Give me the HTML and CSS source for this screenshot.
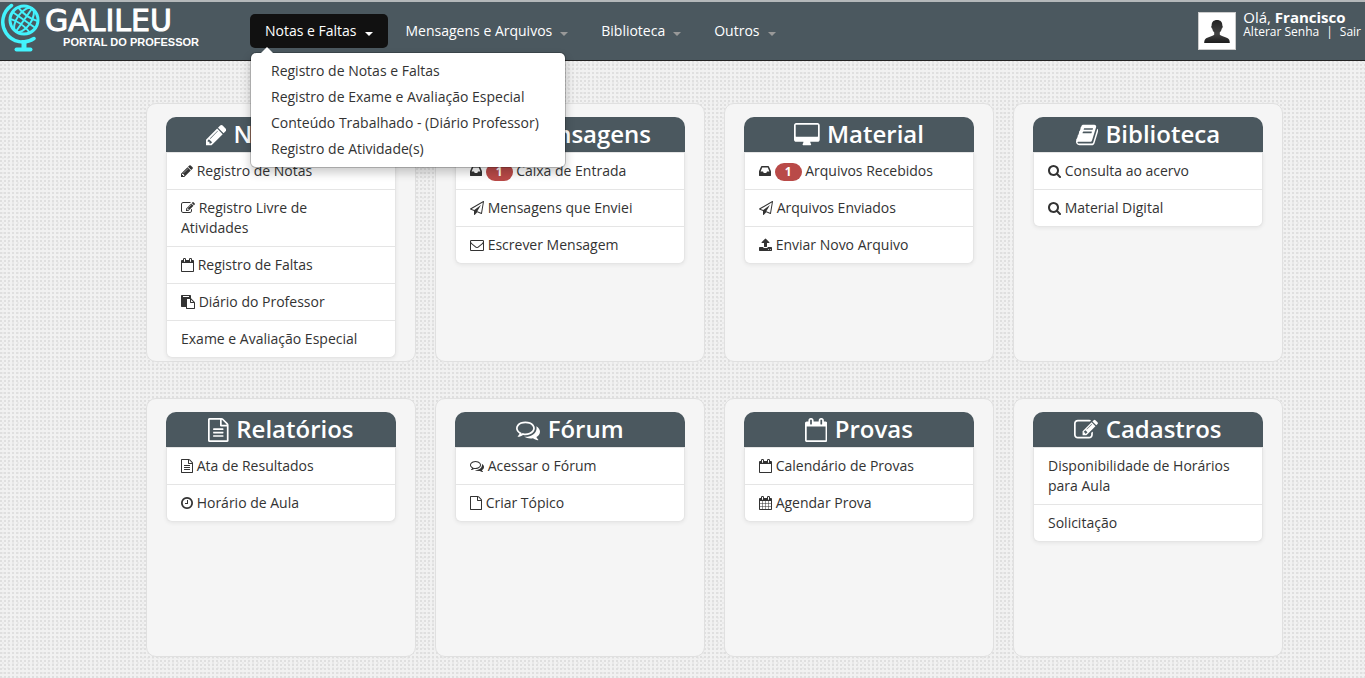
FILE: index.html
```html
<!DOCTYPE html>
<html lang="pt-BR">
<head>
<meta charset="utf-8">
<meta name="viewport" content="width=device-width, initial-scale=1">
<title>Galileu - Portal do Professor</title>
<link rel="stylesheet" href="styles.css">
</head>
<body>
<svg class="sprite" aria-hidden="true">
  <defs>
    <path id="pencil" d="M491 1536l91-91-235-235-91 91v107h128v128h107zm523-928q0-22-22-22-10 0-17 7l-542 542q-7 7-7 17 0 22 22 22 10 0 17-7l542-542q7-7 7-17zm-54-192l416 416-832 832h-416v-416zm683 96q0 53-37 90l-166 166-416-416 166-165q36-38 90-38 53 0 91 38l235 234q37 39 37 91z"/>
    <path id="edit" d="M888 1184l116-116-152-152-116 116v56h96v96h56zm440-720q-16-16-33 1l-350 350q-17 17-1 33t33-1l350-350q17-17 1-33zm80 594v190q0 119-84.5 203.5t-203.5 84.5h-832q-119 0-203.5-84.5t-84.5-203.5v-832q0-119 84.5-203.5t203.5-84.5h832q63 0 117 25 15 7 18 23 3 17-9 29l-49 49q-14 14-32 8-23-6-45-6h-832q-66 0-113 47t-47 113v832q0 66 47 113t113 47h832q66 0 113-47t47-113v-126q0-13 9-22l64-64q15-15 35-7t20 29zm-96-738l288 288-672 672h-288v-288zm444 132l-92 92-288-288 92-92q28-28 68-28t68 28l152 152q28 28 28 68t-28 68z"/>
    <path id="calendar-o" d="M192 1664h1408v-1024h-1408v1024zm384-1216v-288q0-14-9-23t-23-9h-64q-14 0-23 9t-9 23v288q0 14 9 23t23 9h64q14 0 23-9t9-23zm768 0v-288q0-14-9-23t-23-9h-64q-14 0-23 9t-9 23v288q0 14 9 23t23 9h64q14 0 23-9t9-23zm384-64v1280q0 52-38 90t-90 38h-1408q-52 0-90-38t-38-90v-1280q0-52 38-90t90-38h128v-96q0-66 47-113t113-47h64q66 0 113 47t47 113v96h384v-96q0-66 47-113t113-47h64q66 0 113 47t47 113v96h128q52 0 90 38t38 90z"/>
    <path id="calendar" d="M192 1664h288v-288h-288v288zm352 0h320v-288h-320v288zm-352-352h288v-320h-288v320zm352 0h320v-320h-320v320zm-352-384h288v-288h-288v288zm736 736h320v-288h-320v288zm-384-736h320v-288h-320v288zm768 736h288v-288h-288v288zm-384-352h320v-320h-320v320zm-352-864v-288q0-13-9.5-22.5t-22.5-9.5h-64q-13 0-22.5 9.5t-9.5 22.5v288q0 13 9.5 22.5t22.5 9.5h64q13 0 22.5-9.5t9.5-22.5zm736 864h288v-320h-288v320zm-384-384h320v-288h-320v288zm384 0h288v-288h-288v288zm32-480v-288q0-13-9.5-22.5t-22.5-9.5h-64q-13 0-22.5 9.5t-9.5 22.5v288q0 13 9.5 22.5t22.5 9.5h64q13 0 22.5-9.5t9.5-22.5zm384-64v1280q0 52-38 90t-90 38h-1408q-52 0-90-38t-38-90v-1280q0-52 38-90t90-38h128v-96q0-66 47-113t113-47h64q66 0 113 47t47 113v96h384v-96q0-66 47-113t113-47h64q66 0 113 47t47 113v96h128q52 0 90 38t38 90z"/>
    <path id="paste" d="M768 1664h896v-640h-416q-40 0-68-28t-28-68v-416h-384v1152zm256-1440v-64q0-13-9.500-22.500t-22.500-9.500h-704q-13 0-22.500 9.500t-9.500 22.500v64q0 13 9.500 22.500t22.500 9.500h704q13 0 22.500-9.500t9.500-22.500zm256 672h299l-299-299v299zm512 128v672q0 40-28 68t-68 28h-960q-40 0-68-28t-28-68v-160h-544q-40 0-68-28t-28-68v-1344q0-40 28-68t68-28h1088q40 0 68 28t28 68v328q21 13 36 28l408 408q28 28 48 76t20 88z"/>
    <path id="inbox" d="M1151 960h316q-1-3-2.500-8t-2.500-8l-212-496h-708l-212 496q-1 2-2.500 8t-2.500 8h316l95 192h320zm513 30v482q0 26-19 45t-45 19h-1408q-26 0-45-19t-19-45v-482q0-62 25-123l238-552q10-25 36.500-42t52.500-17h832q26 0 52.500 17t36.500 42l238 552q25 61 25 123z"/>
    <path id="plane" d="M1764 11q33 24 27 64l-256 1536q-5 29-32 45-14 8-31 8-11 0-24-5l-527-215-298 327q-18 21-47 21-14 0-23-4-19-7-30-23.500t-11-36.500v-452l-472-193q-37-14-40-55-3-39 32-59l1664-960q35-21 68 2zm-342 1499l221-1323-1434 827 336 137 863-639-478 797z"/>
    <path id="envelope" d="M1664 1504v-768q-32 36-69 66-268 206-426 338-51 43-83 67t-86.500 48.500-102.500 24.500h-2q-48 0-102.500-24.500t-86.500-48.500-83-67q-158-132-426-338-37-30-69-66v768q0 13 9.500 22.500t22.500 9.500h1472q13 0 22.500-9.500t9.500-22.500zm0-1051v-24.500l-.5-13-3-12.500-5.500-9-9-7.500-14-2.500h-1472q-13 0-22.500 9.500t-9.500 22.500q0 168 147 284 193 152 401 317 6 5 35 29.500t46 37.500 44.500 31.500 50.500 27.500 43 9h2q20 0 43-9t50.500-27.500 44.500-31.500 46-37.500 35-29.500q208-165 401-317 54-43 100.500-115.500t46.500-131.500zm128-37v1088q0 66-47 113t-113 47h-1472q-66 0-113-47t-47-113v-1088q0-66 47-113t113-47h1472q66 0 113 47t47 113z"/>
    <path id="upload" d="M1344 1472q0-26-19-45t-45-19-45 19-19 45 19 45 45 19 45-19 19-45zm256 0q0-26-19-45t-45-19-45 19-19 45 19 45 45 19 45-19 19-45zm128-224v320q0 40-28 68t-68 28h-1472q-40 0-68-28t-28-68v-320q0-40 28-68t68-28h427q21 56 70.500 92t110.500 36h256q61 0 110.500-36t70.500-92h427q40 0 68 28t28 68zm-325-648q-17 40-59 40h-256v448q0 26-19 45t-45 19h-256q-26 0-45-19t-19-45v-448h-256q-42 0-59-40-17-39 14-69l448-448q18-19 45-19t45 19l448 448q31 30 14 69z"/>
    <path id="desktop" d="M1728 992v-832q0-13-9.500-22.500t-22.500-9.500h-1600q-13 0-22.500 9.500t-9.500 22.500v832q0 13 9.500 22.500t22.500 9.500h1600q13 0 22.500-9.500t9.500-22.500zm128-832v1088q0 66-47 113t-113 47h-544q0 37 16 77.500t32 71 16 43.500q0 26-19 45t-45 19h-512q-26 0-45-19t-19-45q0-14 16-44t32-70 16-78h-544q-66 0-113-47t-47-113v-1088q0-66 47-113t113-47h1600q66 0 113 47t47 113z"/>
    <path id="book" d="M1703 478q40 57 18 129l-275 906q-19 64-76.500 107.500t-122.500 43.500h-923q-77 0-148.500-53.500t-99.500-131.500q-24-67-2-127 0-4 3-27t4-37q1-8-3-21.500t-3-19.500q2-11 8-21t16.500-23.500 16.500-23.500q23-38 45-91.500t30-91.500q3-10 .5-30t-.5-28q3-11 17-28t17-23q21-36 42-92t25-90q1-9-2.500-32t.5-28q4-13 22-30.500t22-22.500q19-26 42.500-84.500t27.500-96.500q1-8-3-25.500t-2-26.500q2-8 9-18t18-23 17-21q8-12 16.500-30.500t15-35 16-36 19.500-32 26.500-23.500 36-11.500 47.500 5.500l-1 3q38-9 51-9h761q74 0 114 56t18 130l-274 906q-36 119-71.500 153.500t-128.500 34.500h-869q-27 0-38 15-11 16-1 43 24 70 144 70h923q29 0 56-15.500t35-41.500l300-987q7-22 5-57 38 15 59 43zm-1064 2q-4 13 2 22.500t20 9.500h608q13 0 25.500-9.500t16.500-22.500l21-64q4-13-2-22.500t-20-9.500h-608q-13 0-25.500 9.500t-16.500 22.500zm-83 256q-4 13 2 22.500t20 9.500h608q13 0 25.500-9.500t16.500-22.500l21-64q4-13-2-22.500t-20-9.500h-608q-13 0-25.500 9.500t-16.500 22.500z"/>
    <path id="search" d="M1216 832q0-185-131.500-316.500t-316.500-131.500-316.500 131.500-131.500 316.500 131.500 316.500 316.500 131.500 316.500-131.500 131.500-316.500zm512 832q0 52-38 90t-90 38q-54 0-90-38l-343-342q-179 124-399 124-143 0-273.500-55.500t-225-150-150-225-55.500-273.500 55.500-273.500 150-225 225-150 273.500-55.500 273.500 55.500 225 150 150 225 55.500 273.500q0 220-124 399l343 343q37 37 37 90z"/>
    <path id="file-o" d="M1596 380q28 28 48 76t20 88v1152q0 40-28 68t-68 28h-1344q-40 0-68-28t-28-68v-1600q0-40 28-68t68-28h896q40 0 88 20t76 48zm-444-244v376h376q-10-29-22-41l-313-313q-12-12-41-22zm384 1528v-1024h-416q-40 0-68-28t-28-68v-416h-768v1536h1280z"/>
    <g id="file-text">
      <use href="#file-o"/>
      <path d="M512 800q0-14 9-23t23-9h704q14 0 23 9t9 23v64q0 14-9 23t-23 9h-704q-14 0-23-9t-9-23v-64zm736 224q14 0 23 9t9 23v64q0 14-9 23t-23 9h-704q-14 0-23-9t-9-23v-64q0-14 9-23t23-9h704zm0 256q14 0 23 9t9 23v64q0 14-9 23t-23 9h-704q-14 0-23-9t-9-23v-64q0-14 9-23t23-9h704z"/>
    </g>
    <path id="clock" d="M1024 544v448q0 14-9 23t-23 9h-320q-14 0-23-9t-9-23v-64q0-14 9-23t23-9h224v-352q0-14 9-23t23-9h64q14 0 23 9t9 23zm416 352q0-148-73-273t-198-198-273-73-273 73-198 198-73 273 73 273 198 198 273 73 273-73 198-198 73-273zm224 0q0 209-103 385.500t-279.500 279.500-385.500 103-385.500-103-279.500-279.500-103-385.500 103-385.500 279.500-279.500 385.500-103 385.500 103 279.500 279.500 103 385.500z"/>
    <path id="comments" d="M704 384q-153 0-286 52t-211.500 141-78.500 191q0 82 53 158t149 132l97 56-35 84q34-20 62-39l44-31 53 10q78 14 153 14 153 0 286-52t211.500-141 78.500-191-78.500-191-211.500-141-286-52zm0-128q191 0 353.500 68.500t256.500 186.500 94 257-94 257-256.500 186.500-353.500 68.500q-86 0-176-16-124 88-278 128-36 9-86 16h-3q-11 0-20.500-8t-11.500-21q-1-3-1-6.500t.5-6.500 2-6l2.500-5 3.500-5.500 4-5 4.500-5 4-4.500q5-6 23-25t26-29.500 22.500-29 25-38.500 20.500-44q-124-72-195-177t-71-224q0-139 94-257t256.500-186.500 353.500-68.500zm822 1169q10 24 20.500 44t25 38.500 22.500 29 26 29.500 23 25q1 1 4 4.500t4.500 5 4 5 3.500 5.500l2.500 5 2 6 .5 6.500-1 6.500q-3 14-13 22t-22 7q-50-7-86-16-154-40-278-128-90 16-176 16-271 0-472-132 58 4 88 4 161 0 309-45t264-129q125-92 192-212t67-254q0-77-23-152 129 71 204 178t75 230q0 120-71 224.500t-195 176.500z"/>
  </defs>
</svg>

<header class="navbar">
  <a class="brand" href="#" aria-label="Galileu - Portal do Professor">
    <svg class="globe" viewBox="0 0 42 50" aria-hidden="true">
      <g fill="none" stroke="#43f3fd">
        <circle cx="24" cy="18" r="14" stroke-width="3"/>
        <g stroke-width="2" transform="rotate(35 24 18)">
          <path d="M24 4v28M10 18h28M12 11q12 4 24 0M12 25q12-4 24 0"/>
          <ellipse cx="24" cy="18" rx="7" ry="14"/>
        </g>
        <path d="M11.500 3.500A18.500 18.500 0 0 0 34 36.500" stroke-width="3.500" stroke-linecap="round"/>
        <path d="M24 38v9" stroke-width="5"/>
        <path d="M16.500 47.500h14" stroke-width="4" stroke-linecap="round"/>
      </g>
    </svg>
    <span class="brand-text">
      <span class="brand-name">GALILEU</span>
      <span class="brand-sub">PORTAL DO PROFESSOR</span>
    </span>
  </a>

  <nav class="menu" aria-label="Principal">
    <div class="menu-item">
      <button class="menu-button active" type="button" aria-expanded="true">Notas e Faltas <span class="caret"></span></button>
      <ul class="dropdown">
        <li><a href="#">Registro de Notas e Faltas</a></li>
        <li><a href="#">Registro de Exame e Avaliação Especial</a></li>
        <li><a href="#">Conteúdo Trabalhado - (Diário Professor)</a></li>
        <li><a href="#">Registro de Atividade(s)</a></li>
      </ul>
    </div>
    <div class="menu-item"><button class="menu-button" type="button">Mensagens e Arquivos <span class="caret"></span></button></div>
    <div class="menu-item"><button class="menu-button" type="button">Biblioteca <span class="caret"></span></button></div>
    <div class="menu-item"><button class="menu-button" type="button">Outros <span class="caret"></span></button></div>
  </nav>

  <div class="user">
    <svg class="avatar" viewBox="0 0 38 38" role="img" aria-label="Foto do usuário">
      <defs><linearGradient id="shade" x1="0" y1="0" x2="0" y2="1"><stop offset="0" stop-color="#222"/><stop offset=".6" stop-color="#444"/><stop offset="1" stop-color="#1c1c1c"/></linearGradient></defs>
      <rect x=".5" y=".5" width="37" height="37" fill="#fff" stroke="#ccc"/>
      <path fill="url(#shade)" d="M19 8c-3.500 0-5.500 2.200-5.300 5.500-.8.300-.5 2.700.6 3.200.3 1.700 1 2.800 1.900 3.600v2.500c-1.500 1.700-7 2.200-8.800 4.200-.9 1-1.200 2.500-1.200 4h25.600c0-1.500-.3-3-1.200-4-1.800-2-7.300-2.500-8.800-4.200v-2.500c.9-.8 1.600-1.900 1.900-3.600 1.100-.5 1.400-2.900.6-3.200C24.500 10.200 22.500 8 19 8z"/>
    </svg>
    <div class="user-info">
      <p class="greeting">Olá, <strong>Francisco</strong></p>
      <p class="user-links"><a href="#">Alterar Senha</a><span>|</span><a href="#">Sair</a></p>
    </div>
  </div>
</header>

<main class="panels">
  <section class="panel">
    <h2><svg viewBox="128 0 1536 1792"><use href="#pencil"/></svg> Nota/Falta</h2>
    <ul>
      <li><a href="#"><svg viewBox="128 0 1536 1792"><use href="#pencil"/></svg> Registro de Notas</a></li>
      <li><a href="#"><svg viewBox="0 0 1792 1792"><use href="#edit"/></svg> Registro Livre de Atividades</a></li>
      <li><a href="#"><svg viewBox="64 0 1664 1792"><use href="#calendar-o"/></svg> Registro de Faltas</a></li>
      <li><a href="#"><svg viewBox="0 0 1792 1792"><use href="#paste"/></svg> Diário do Professor</a></li>
      <li><a href="#">Exame e Avaliação Especial</a></li>
    </ul>
  </section>
  <section class="panel">
    <h2><svg viewBox="0 0 1792 1792"><use href="#envelope"/></svg> Mensagens</h2>
    <ul>
      <li><a href="#"><svg viewBox="128 0 1536 1792"><use href="#inbox"/></svg> <span class="badge">1</span> Caixa de Entrada</a></li>
      <li><a href="#"><svg viewBox="0 0 1792 1792"><use href="#plane"/></svg> Mensagens que Enviei</a></li>
      <li><a href="#"><svg viewBox="0 0 1792 1792"><use href="#envelope"/></svg> Escrever Mensagem</a></li>
    </ul>
  </section>
  <section class="panel">
    <h2><svg viewBox="-64 0 1920 1792"><use href="#desktop"/></svg> Material</h2>
    <ul>
      <li><a href="#"><svg viewBox="128 0 1536 1792"><use href="#inbox"/></svg> <span class="badge">1</span> Arquivos Recebidos</a></li>
      <li><a href="#"><svg viewBox="0 0 1792 1792"><use href="#plane"/></svg> Arquivos Enviados</a></li>
      <li><a href="#"><svg viewBox="64 0 1664 1792"><use href="#upload"/></svg> Enviar Novo Arquivo</a></li>
    </ul>
  </section>
  <section class="panel">
    <h2><svg viewBox="64 0 1664 1792"><use href="#book"/></svg> Biblioteca</h2>
    <ul>
      <li><a href="#"><svg viewBox="64 0 1664 1792"><use href="#search"/></svg> Consulta ao acervo</a></li>
      <li><a href="#"><svg viewBox="64 0 1664 1792"><use href="#search"/></svg> Material Digital</a></li>
    </ul>
  </section>
  <section class="panel">
    <h2><svg viewBox="128 0 1536 1792"><use href="#file-text"/></svg> Relatórios</h2>
    <ul>
      <li><a href="#"><svg viewBox="128 0 1536 1792"><use href="#file-text"/></svg> Ata de Resultados</a></li>
      <li><a href="#"><svg viewBox="128 0 1536 1792"><use href="#clock"/></svg> Horário de Aula</a></li>
    </ul>
  </section>
  <section class="panel">
    <h2><svg viewBox="0 0 1792 1792"><use href="#comments"/></svg> Fórum</h2>
    <ul>
      <li><a href="#"><svg viewBox="0 0 1792 1792"><use href="#comments"/></svg> Acessar o Fórum</a></li>
      <li><a href="#"><svg viewBox="128 0 1536 1792"><use href="#file-o"/></svg> Criar Tópico</a></li>
    </ul>
  </section>
  <section class="panel">
    <h2><svg viewBox="64 0 1664 1792"><use href="#calendar-o"/></svg> Provas</h2>
    <ul>
      <li><a href="#"><svg viewBox="64 0 1664 1792"><use href="#calendar-o"/></svg> Calendário de Provas</a></li>
      <li><a href="#"><svg viewBox="64 0 1664 1792"><use href="#calendar"/></svg> Agendar Prova</a></li>
    </ul>
  </section>
  <section class="panel">
    <h2><svg viewBox="0 0 1792 1792"><use href="#edit"/></svg> Cadastros</h2>
    <ul>
      <li><a href="#">Disponibilidade de Horários para Aula</a></li>
      <li><a href="#">Solicitação</a></li>
    </ul>
  </section>
</main>
</body>
</html>
```

FILE: styles.css
```css
* {
  box-sizing: border-box;
}

body {
  margin: 0;
  color: #333;
  font: 14px/20px "Open Sans", "Noto Sans", sans-serif;
  background-color: #f1f1f1;
  background-image:
    radial-gradient(circle at 1px 1px, #dfdfdf 1px, transparent 1px),
    radial-gradient(circle at 3px 3px, #e9e9e9 1px, transparent 1px);
  background-size: 4px 4px, 5px 5px;
}

a {
  color: inherit;
  text-decoration: none;
}

ul,
p,
h2 {
  margin: 0;
  padding: 0;
}

ul {
  list-style: none;
}

.sprite {
  position: absolute;
  width: 0;
  height: 0;
}

/* Top bar */
.navbar {
  display: flex;
  align-items: flex-start;
  color: #fff;
  background: #4b585f;
  border-top: 2px solid #b4b8ba;
  border-bottom: 1px solid #222;
}

.brand {
  display: flex;
  gap: 3px;
  width: 250px;
  padding-bottom: 8px;
}

.globe {
  width: 42px;
  height: 50px;
}

.brand-text {
  display: flex;
  flex-direction: column;
  width: 154px;
}

.brand-name {
  padding-top: 4px;
  font: 30px/30px "DejaVu Sans", sans-serif;
  -webkit-text-stroke: 1px #fff;
}

.brand-sub {
  font: bold 11px/12px "Liberation Sans", Arial, sans-serif;
  text-align: right;
  white-space: nowrap;
}

.menu {
  display: flex;
  gap: 3px;
  padding-top: 12px;
}

.menu-item {
  position: relative;
}

.menu-button {
  display: flex;
  align-items: center;
  gap: 8px;
  height: 34px;
  padding: 0 15px;
  color: #fff;
  font: inherit;
  white-space: nowrap;
  background: none;
  border: 0;
  border-radius: 5px;
}

.menu-button.active {
  background: #111;
}

.caret {
  margin-top: 6px;
  border: 4px solid transparent;
  border-top-color: #999;
  border-bottom: 0;
}

.active .caret {
  border-top-color: #fff;
}

.dropdown {
  position: absolute;
  top: 38px;
  left: 0;
  z-index: 10;
  padding: 5px 0;
  color: #333;
  white-space: nowrap;
  background: #fff;
  background-clip: padding-box;
  border: 1px solid rgba(0, 0, 0, .2);
  border-radius: 6px;
  box-shadow: 0 5px 10px rgba(0, 0, 0, .2);
}

.dropdown::before {
  content: "";
  position: absolute;
  top: -6px;
  left: 10px;
  border: 6px solid transparent;
  border-bottom-color: #fff;
  border-top: 0;
}

.dropdown a {
  display: block;
  padding: 3px 26px 3px 20px;
}

.user {
  display: flex;
  gap: 7px;
  margin-left: auto;
  padding: 7px 4px 0 0;
}

.avatar {
  width: 38px;
  height: 38px;
  margin-top: 3px;
}

.greeting {
  font-size: 15px;
  line-height: 16px;
}

.user-links {
  display: flex;
  gap: 7px;
  font-size: 12px;
  line-height: 14px;
}

/* Shortcut panels */
.panels {
  display: grid;
  grid-template-columns: repeat(4, minmax(0, 1fr));
  gap: 36px 19px;
  padding: 42px 0 21px 64px;
}

@media (min-width: 1201px) {
  .panels {
    padding-left: calc((100% - 1137px + 64px) / 2);
    padding-right: calc((100% - 1137px - 64px) / 2);
  }
}

.panel {
  min-height: 259px;
  padding: 13px 19px 3px;
  background: #f5f5f5;
  border: 1px solid #e0e0e0;
  border-radius: 10px;
}

.panel h2 {
  padding-bottom: 1px;
  color: #fff;
  font-size: 24px;
  font-weight: 600;
  line-height: 34px;
  text-align: center;
  background: #4b585f;
  border-radius: 10px 10px 0 0;
}

.panel svg {
  height: 1em;
  fill: currentColor;
  vertical-align: -2px;
}

.panel h2 svg {
  margin-right: 1px;
  vertical-align: -4px;
}

.panel ul {
  background: #fff;
  border: 1px solid #e5e5e5;
  border-top: 0;
  border-radius: 0 0 6px 6px;
  box-shadow: 0 1px 4px rgba(0, 0, 0, .07);
}

.panel li {
  border-top: 1px solid #e5e5e5;
}

.panel li a {
  display: block;
  padding: 8px 18px 8px 14px;
}

.badge {
  display: inline-block;
  padding: 0 10px;
  color: #fff;
  font-size: 12px;
  font-weight: 700;
  line-height: 18px;
  background: #b94a48;
  border-radius: 9px;
}
```
